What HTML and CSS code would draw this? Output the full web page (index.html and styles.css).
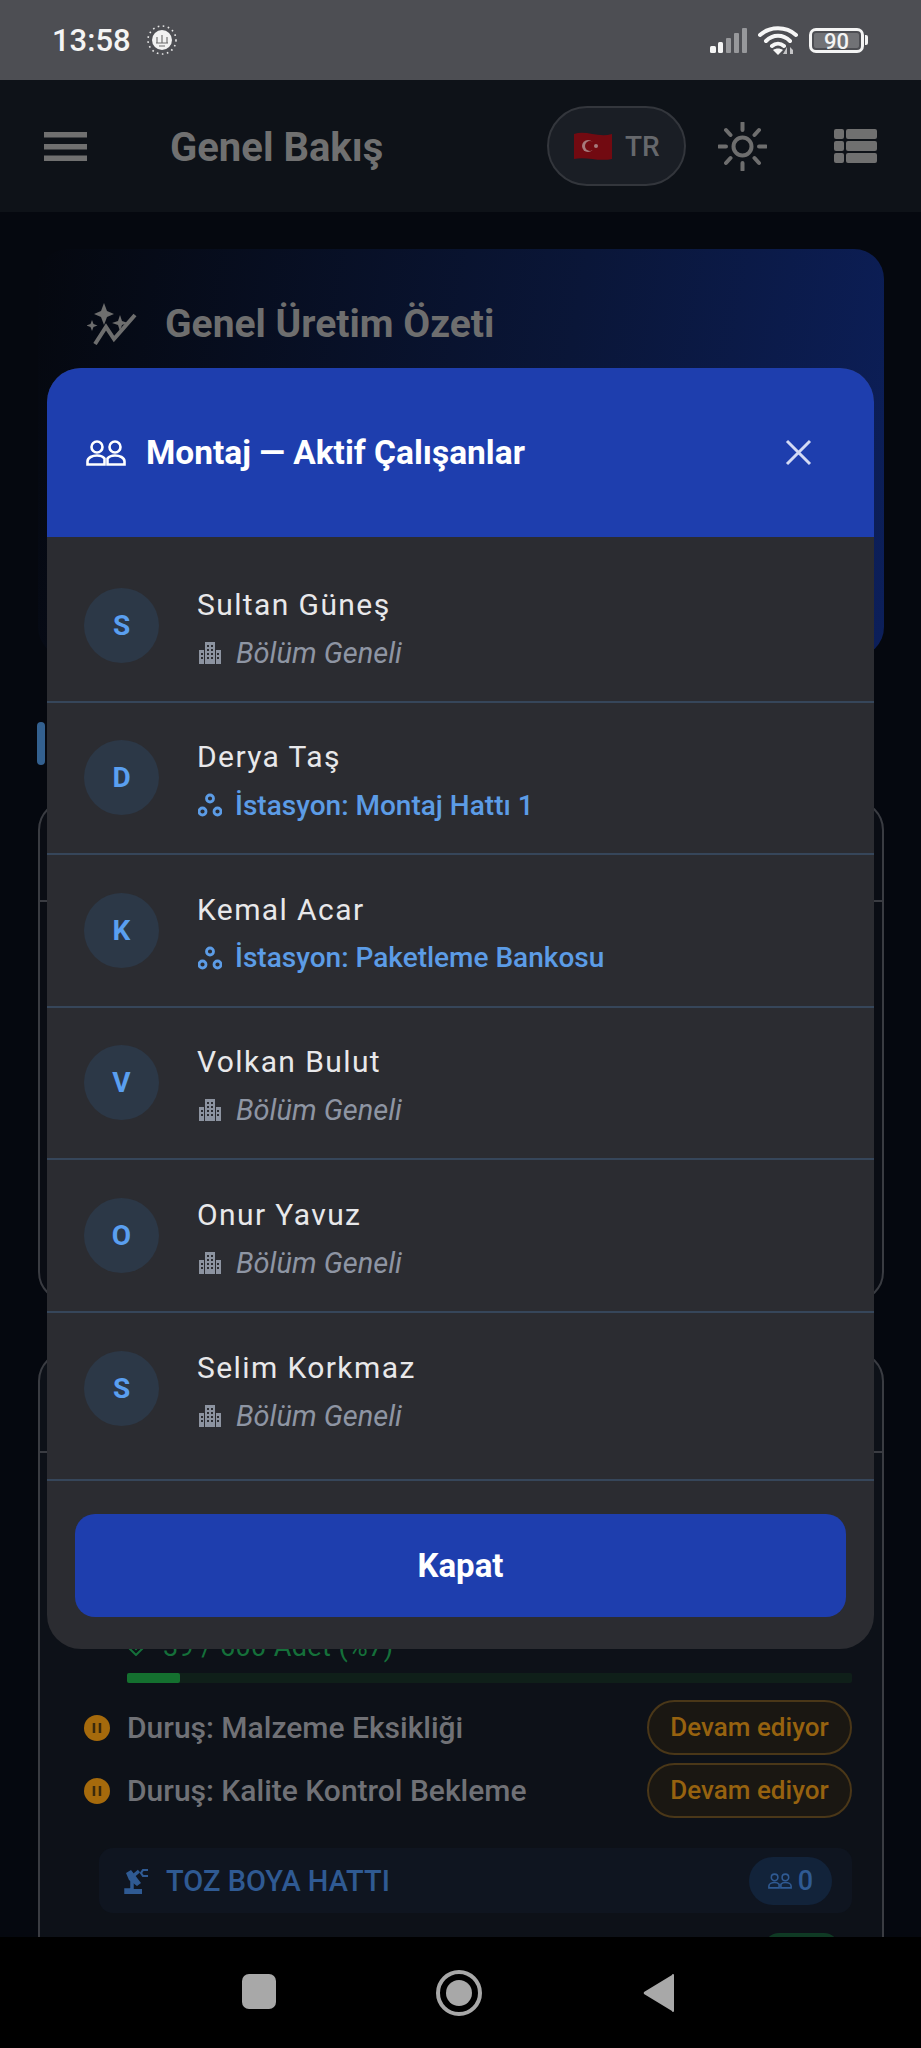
FILE: index.html
```html
<!DOCTYPE html>
<html lang="tr">
<head>
  <meta charset="UTF-8">
  <title>Genel Bakış</title>
  <meta name="viewport" content="width=device-width,initial-scale=1">
  <link rel="stylesheet" href="styles.css">
</head>
<body>
  <div class="screen">

    <!-- status bar -->
    <div class="statusbar">
      <div class="status-left">
        <span class="clock">13:58</span>
        <svg class="mosque" viewBox="0 0 30 30">
          <circle cx="15" cy="15" r="14" fill="none" stroke="#e8e8e8" stroke-width="1.6" stroke-dasharray="1.6 3.5"/>
          <circle cx="15" cy="15" r="10" fill="#f2f2f2"/>
          <path d="M10 12v6M20 12v6M15 10v8M9 18h12M12 21h6" stroke="#6a6a6a" stroke-width="1.1" fill="none"/>
        </svg>
      </div>
      <div class="status-right">
        <svg class="signal" viewBox="0 0 38 25">
          <rect x="0" y="18" width="6" height="7" rx="1.5" fill="#f4f4f4"/>
          <rect x="8" y="14" width="5" height="11" rx="1.5" fill="#f4f4f4"/>
          <rect x="16" y="10" width="5" height="15" rx="1" fill="#97989b"/>
          <rect x="24" y="5" width="5" height="20" rx="1" fill="#97989b"/>
          <rect x="32" y="0" width="5" height="25" rx="1" fill="#97989b"/>
        </svg>
        <svg class="wifi" viewBox="0 0 40 30">
          <path d="M2 10C12 1 28 1 38 10M8 16C15 9 25 9 32 16M14 21C17.500 18 22.500 18 26 21" fill="none" stroke="#f6f6f6" stroke-width="4" stroke-linecap="round"/>
          <path d="M20 30l-5-5c3-2 7-2 10 0z" fill="#f6f6f6"/>
          <path d="M29 29v-7l-4 7zM32 22v7h3v-4z" fill="#c4c4c6"/>
        </svg>
        <div class="battery">
          <div class="battery-body"><span class="battery-level">90</span></div>
          <div class="battery-nub"></div>
        </div>
      </div>
    </div>

    <!-- app bar -->
    <header class="appbar">
      <svg class="menu-icon" viewBox="0 0 43 29"><path d="M0 0h43v5.500H0zM0 12h43v5.500H0zM0 23.500h43V29H0z" fill="#707070"/></svg>
      <h1 class="page-title">Genel Bakış</h1>
      <div class="lang-pill">
        <svg class="flag" viewBox="0 0 38 28">
          <path d="M0 2c12-4 24 4 38 0v25c-14 3-26-3-38 0z" fill="#720a11"/>
          <circle cx="14" cy="14" r="6" fill="#a67a7c"/>
          <circle cx="16" cy="14" r="5" fill="#720a11"/>
          <circle cx="22" cy="14" r="2" fill="#a67a7c"/>
        </svg>
        <span class="lang-code">TR</span>
      </div>
      <svg class="sun-icon" viewBox="0 0 49 49">
        <circle cx="24.500" cy="24.500" r="9" fill="none" stroke="#6e6e6e" stroke-width="4"/>
        <path d="M24.500 1v7M24.500 41v7M1 24.500h7M41 24.500h7M8 8l4.500 5M36.500 36l4.500 5M41 8l-4.500 5M12.500 36L8 41" stroke="#6e6e6e" stroke-width="4" stroke-linecap="round"/>
      </svg>
      <svg class="list-icon" viewBox="0 0 43 34">
        <g fill="#707070">
          <rect x="0" y="0" width="10" height="10" rx="2"/><rect x="12" y="0" width="31" height="10" rx="2"/>
          <rect x="0" y="12" width="10" height="10" rx="2"/><rect x="12" y="12" width="31" height="10" rx="2"/>
          <rect x="0" y="24" width="10" height="10" rx="2"/><rect x="12" y="24" width="31" height="10" rx="2"/>
        </g>
      </svg>
    </header>

    <!-- dimmed page behind the dialog -->
    <main class="content">
      <section class="hero">
        <svg class="hero-icon" viewBox="0 0 51 42">
          <path d="M17 0l3 8 7 3-7 3-3 8-3-8-7-3 7-3zM33 12l2 6 6 2-6 2-2 6-2-6-6-2 6-2zM5 17l1.500 4 4 1.500-4 1.500L5 28l-1.500-4-4-1.500 4-1.500z" fill="#6e6e6e"/>
          <path d="M8 41l11-17 8 12 21-24" fill="none" stroke="#6e6e6e" stroke-width="4"/>
        </svg>
        <h2 class="hero-title">Genel Üretim Özeti</h2>
      </section>

      <div class="section-mark"></div>

      <section class="card card-first">
        <div class="card-head"></div>
      </section>

      <section class="card card-second">
        <div class="card-head"></div>
        <div class="card-body">
          <div class="count-line">
            <svg class="count-icon" viewBox="0 0 18 18"><path d="M2 4l7 7 7-7M2 10l7 7 7-7" fill="none" stroke="#15703a" stroke-width="2"/></svg>
            <span>39 / 600 Adet (%7)</span>
          </div>
          <div class="progress"><div class="progress-fill" style="width:7.300%"></div></div>

          <div class="stop-row">
            <svg class="pause-icon" viewBox="0 0 26 26"><circle cx="13" cy="13" r="13" fill="#a56a0c"/><path d="M10 8v10M16 8v10" stroke="#3a2a0c" stroke-width="2.500"/></svg>
            <span class="stop-text">Duruş: Malzeme Eksikliği</span>
            <span class="chip">Devam ediyor</span>
          </div>
          <div class="stop-row">
            <svg class="pause-icon" viewBox="0 0 26 26"><circle cx="13" cy="13" r="13" fill="#a56a0c"/><path d="M10 8v10M16 8v10" stroke="#3a2a0c" stroke-width="2.500"/></svg>
            <span class="stop-text">Duruş: Kalite Kontrol Bekleme</span>
            <span class="chip">Devam ediyor</span>
          </div>

          <div class="line-row">
            <svg class="robot-icon" viewBox="0 0 26 26">
              <path d="M3 26v-4h4l2-1V9l7-6" fill="none" stroke="#2f5a93" stroke-width="3.500"/>
              <path d="M3 26v-5h16v5zM6 12L3 5l5-3 10 13-4 3z" fill="#2f5a93"/>
              <path d="M25 2h-5l-2 3 2 3h5" fill="none" stroke="#2f5a93" stroke-width="2.200"/>
            </svg>
            <span class="line-name">TOZ BOYA HATTI</span>
            <span class="line-count">
              <svg class="count-people" viewBox="0 0 40 26">
                <g fill="none" stroke="#2f5a93" stroke-width="2.600">
                  <circle cx="11" cy="7" r="5.500"/><circle cx="29" cy="7" r="5.500"/>
                  <path d="M1.500 24.500v-3c0-4 5-6 9.500-6 3 0 6 1 7.500 3v6zM38.500 24.500v-3c0-4-5-6-9.500-6-3 0-6 1-7.500 3v6z"/>
                </g>
              </svg>
              0
            </span>
          </div>
          <div class="next-line"><span class="next-pill"></span></div>
        </div>
      </section>
    </main>

    <!-- nav buttons -->
    <div class="navbar">
      <div class="nav-square"></div>
      <svg class="nav-home" viewBox="0 0 46 46"><circle cx="23" cy="23" r="21" fill="none" stroke="#a8a8a8" stroke-width="4"/><circle cx="23" cy="23" r="13" fill="#a8a8a8"/></svg>
      <svg class="nav-back" viewBox="0 0 32 38"><path d="M31 1v36a1 1 0 0 1-2 0L1 20a2 2 0 0 1 0-2L29 1a1 1 0 0 1 2 0z" fill="#a8a8a8"/></svg>
    </div>

    <!-- dialog -->
    <div class="dialog">
      <div class="dialog-head">
        <svg class="head-people" viewBox="0 0 40 26">
          <g fill="none" stroke="#fff" stroke-width="2.600">
            <circle cx="11" cy="7" r="5.500"/><circle cx="29" cy="7" r="5.500"/>
            <path d="M1.500 24.500v-3c0-4 5-6 9.500-6 3 0 6 1 7.500 3v6zM38.500 24.500v-3c0-4-5-6-9.500-6-3 0-6 1-7.500 3v6z"/>
          </g>
        </svg>
        <span class="dialog-title">Montaj — Aktif Çalışanlar</span>
        <svg class="close-icon" viewBox="0 0 27 27"><path d="M2 2l23 23M25 2L2 25" stroke="#d3daf5" stroke-width="3"/></svg>
      </div>

      <div class="worker-list">
        <div class="worker">
          <div class="avatar">S</div>
          <div class="worker-info">
            <div class="worker-name">Sultan Güneş</div>
            <div class="worker-place"><svg class="ic-building" viewBox="0 0 22 22"><use href="#building"/></svg>Bölüm Geneli</div>
          </div>
        </div>
        <div class="worker">
          <div class="avatar">D</div>
          <div class="worker-info">
            <div class="worker-name">Derya Taş</div>
            <div class="worker-place station"><svg class="ic-hub" viewBox="0 0 24 24"><use href="#hub"/></svg>İstasyon: Montaj Hattı 1</div>
          </div>
        </div>
        <div class="worker">
          <div class="avatar">K</div>
          <div class="worker-info">
            <div class="worker-name">Kemal Acar</div>
            <div class="worker-place station"><svg class="ic-hub" viewBox="0 0 24 24"><use href="#hub"/></svg>İstasyon: Paketleme Bankosu</div>
          </div>
        </div>
        <div class="worker">
          <div class="avatar">V</div>
          <div class="worker-info">
            <div class="worker-name">Volkan Bulut</div>
            <div class="worker-place"><svg class="ic-building" viewBox="0 0 22 22"><use href="#building"/></svg>Bölüm Geneli</div>
          </div>
        </div>
        <div class="worker">
          <div class="avatar">O</div>
          <div class="worker-info">
            <div class="worker-name">Onur Yavuz</div>
            <div class="worker-place"><svg class="ic-building" viewBox="0 0 22 22"><use href="#building"/></svg>Bölüm Geneli</div>
          </div>
        </div>
        <div class="worker">
          <div class="avatar">S</div>
          <div class="worker-info">
            <div class="worker-name">Selim Korkmaz</div>
            <div class="worker-place"><svg class="ic-building" viewBox="0 0 22 22"><use href="#building"/></svg>Bölüm Geneli</div>
          </div>
        </div>
      </div>

      <div class="dialog-foot">
        <button class="close-btn">Kapat</button>
      </div>
    </div>

    <!-- shared icons -->
    <svg class="icon-defs" width="0" height="0">
      <defs>
        <g id="building">
          <path fill="#8c93a0" fill-rule="evenodd" d="M5 22V8H0v14zM17 22V8h5v14zM6 22V0h10v22z"/>
          <path fill="#2b2c31" d="M8 3h2v2H8zM12 3h2v2h-2zM8 7h2v2H8zM12 7h2v2h-2zM8 11h2v2H8zM12 11h2v2h-2zM8 15h2v2H8zM12 15h2v2h-2zM2 11h2v2H2zM2 15h2v2H2zM18 11h2v2h-2zM18 15h2v2h-2z"/>
        </g>
        <g id="hub" fill="none" stroke="#5c9ce6" stroke-width="2.800">
          <circle cx="12" cy="5.500" r="3.500"/><circle cx="4.500" cy="18.500" r="3.500"/><circle cx="19.500" cy="18.500" r="3.500"/>
        </g>
      </defs>
    </svg>
  </div>
</body>
</html>
```

FILE: styles.css
```css
* { box-sizing: border-box; }
html, body {
  margin: 0;
  padding: 0;
  background: #000;
}
body {
  font-family: Roboto, "Noto Sans", sans-serif;
}
.screen {
  position: relative;
  width: 921px;
  height: 2048px;
  overflow: hidden;
  display: flex;
  flex-direction: column;
  background: #05080f;
}
svg { display: block; flex: none; }
.icon-defs { position: absolute; }

/* -------- status bar -------- */
.statusbar {
  height: 80px;
  flex: none;
  background: #4d4e53;
  display: flex;
  align-items: center;
  justify-content: space-between;
  padding: 14px 53px 14px 52px;
  color: #f4f4f4;
}
.status-left, .status-right {
  display: flex;
  align-items: center;
}
.clock {
  font-size: 31px;
  font-weight: 500;
}
.mosque {
  width: 30px;
  height: 30px;
  margin-left: 16px;
}
.signal {
  width: 38px;
  height: 25px;
}
.wifi {
  width: 40px;
  height: 30px;
  margin-left: 10px;
}
.battery {
  display: flex;
  align-items: center;
  margin-left: 11px;
}
.battery-body {
  width: 55px;
  height: 25px;
  border: 3px solid #f4f4f4;
  border-radius: 7px;
  padding: 2px;
  display: flex;
}
.battery-level {
  flex: 1;
  background: #717276;
  border-radius: 2px;
  font-size: 22px;
  font-weight: 500;
  line-height: 17px;
  text-align: center;
  color: #f4f4f4;
}
.battery-nub {
  width: 3px;
  height: 10px;
  margin-left: 1px;
  background: #f4f4f4;
  border-radius: 0 2px 2px 0;
}

/* -------- app bar -------- */
.appbar {
  height: 132px;
  flex: none;
  background: #0e1218;
  display: flex;
  align-items: center;
  padding: 0 44px;
}
.menu-icon {
  width: 43px;
  height: 29px;
}
.page-title {
  margin: 3px 0 0 83px;
  flex: 1;
  font-size: 40px;
  font-weight: 700;
  color: #707070;
}
.lang-pill {
  width: 139px;
  height: 80px;
  display: flex;
  align-items: center;
  padding-left: 25px;
  background: #1a1e25;
  border: 2px solid #33363c;
  border-radius: 40px;
}
.flag {
  width: 38px;
  height: 28px;
}
.lang-code {
  margin-left: 13px;
  font-size: 28px;
  font-weight: 500;
  color: #66686c;
}
.sun-icon {
  width: 49px;
  height: 49px;
  margin-left: 32px;
}
.list-icon {
  width: 43px;
  height: 34px;
  margin-left: 67px;
}

/* -------- page behind -------- */
.content {
  flex: 1;
  min-height: 0;
  overflow: hidden;
  padding: 37px 37px 0 38px;
}
.hero {
  height: 408px;
  padding: 54px 49px;
  display: flex;
  align-items: flex-start;
  background: linear-gradient(100deg, #05080f 0%, #0a1638 60%, #0c1f5a 100%);
  border-radius: 30px;
}
.hero-icon {
  width: 51px;
  height: 42px;
}
.hero-title {
  margin: 0 0 0 27px;
  font-size: 39px;
  font-weight: 700;
  line-height: 42px;
  color: #6e6e6e;
}
.section-mark {
  width: 8px;
  height: 43px;
  margin: 65px 0 0 -1px;
  background: #33608f;
  border-radius: 4px;
}
.card {
  border: 2px solid #3a3c42;
  border-radius: 30px;
  background: #0a0d14;
}
.card-first {
  height: 502px;
  margin-top: 35px;
}
.card-second {
  height: 700px;
  margin-top: 49px;
  background: #0d1118;
}
.card-head {
  height: 100px;
  border-bottom: 2px solid #3a3c42;
}
.card-body {
  padding: 180px 30px 0 60px;
}
.count-line {
  display: flex;
  align-items: center;
  gap: 18px;
  margin-left: 27px;
  height: 28px;
  font-size: 27px;
  color: #15703a;
  letter-spacing: 0.4px;
}
.count-icon {
  width: 18px;
  height: 18px;
}
.progress {
  margin: 12px 0 0 27px;
  height: 10px;
  background: #0f1f19;
  border-radius: 2px;
}
.progress-fill {
  height: 100%;
  background: #14702f;
  border-radius: 2px;
}
.stop-row {
  display: flex;
  align-items: center;
  height: 55px;
  margin-top: 8px;
}
.progress + .stop-row { margin-top: 17px; }
.pause-icon {
  width: 26px;
  height: 26px;
  margin-left: -16px;
}
.stop-text {
  flex: 1;
  margin-left: 17px;
  font-size: 30px;
  font-weight: 500;
  color: #707176;
}
.chip {
  width: 205px;
  height: 55px;
  text-align: center;
  line-height: 51px;
  font-size: 26px;
  font-weight: 500;
  color: #96620f;
  background: #1a1712;
  border: 2px solid #4a3718;
  border-radius: 28px;
}
.line-row {
  display: flex;
  align-items: center;
  height: 65px;
  margin: 30px 0 0 0;
  margin-left: -1px;
  padding: 0 20px 0 24px;
  background: #0f1520;
  border-radius: 14px;
}
.robot-icon {
  width: 26px;
  height: 26px;
}
.line-name {
  flex: 1;
  margin-left: 17px;
  font-size: 29px;
  font-weight: 500;
  color: #2f5a93;
}
.line-count {
  display: flex;
  align-items: center;
  justify-content: center;
  gap: 6px;
  width: 83px;
  height: 48px;
  background: #12233a;
  border-radius: 24px;
  font-size: 27px;
  font-weight: 500;
  color: #2f5a93;
}
.count-people {
  width: 24px;
  height: 16px;
}
.next-line {
  display: flex;
  justify-content: flex-end;
  padding-right: 13px;
  margin-top: 20px;
}
.next-pill {
  width: 75px;
  height: 30px;
  background: #0f3a24;
  border-radius: 15px;
}

/* -------- nav buttons -------- */
.navbar {
  height: 111px;
  flex: none;
  background: #000;
  position: relative;
  z-index: 3;
  display: flex;
  align-items: center;
  padding: 0 0 0 242px;
}
.nav-square {
  width: 34px;
  height: 35px;
  background: #a8a8a8;
  border-radius: 7px;
  margin-bottom: 2px;
}
.nav-home {
  width: 46px;
  height: 46px;
  margin: 0 0 0 160px;
}
.nav-back {
  width: 32px;
  height: 38px;
  margin-left: 161px;
}

/* -------- dialog -------- */
.dialog {
  position: absolute;
  left: 47px;
  top: 368px;
  width: 827px;
  height: 1281px;
  z-index: 2;
  background: #2b2c31;
  border-radius: 34px;
  overflow: hidden;
  display: flex;
  flex-direction: column;
}
.dialog-head {
  height: 169px;
  flex: none;
  background: #1e3eae;
  display: flex;
  align-items: center;
  padding: 0 62px 0 39px;
  color: #fff;
}
.head-people {
  width: 40px;
  height: 26px;
}
.dialog-title {
  flex: 1;
  margin-left: 20px;
  font-size: 33.5px;
  font-weight: 700;
}
.close-icon {
  width: 27px;
  height: 27px;
}
.worker-list {
  padding: 13px 0 14px;
  border-bottom: 2px solid #36465a;
}
.worker {
  height: 152.5px;
  display: flex;
  align-items: center;
  padding-left: 37px;
  border-bottom: 2px solid #36465a;
}
.worker:last-child { border-bottom: none; }
.avatar {
  width: 75px;
  height: 75px;
  flex: none;
  border-radius: 50%;
  background: #2c3847;
  color: #5a9ff0;
  font-size: 28px;
  font-weight: 700;
  text-align: center;
  line-height: 75px;
}
.worker-info {
  margin-left: 38px;
  padding-top: 6px;
  display: flex;
  flex-direction: column;
  gap: 13px;
}
.worker-name {
  font-size: 30px;
  line-height: 36px;
  letter-spacing: 1.4px;
  color: #e8e8ea;
}
.worker-place {
  display: flex;
  align-items: center;
  height: 34px;
  font-size: 29px;
  font-style: italic;
  color: #8e95a3;
}
.worker-place.station {
  font-style: normal;
  font-weight: 500;
  font-size: 28px;
  color: #5c9ce6;
}
.ic-building {
  width: 22px;
  height: 22px;
  margin: 0 15px 0 2px;
}
.ic-hub {
  width: 24px;
  height: 24px;
  margin: 0 13px 0 1px;
}
.dialog-foot {
  padding: 33px 28px;
}
.close-btn {
  display: block;
  width: 771px;
  height: 103px;
  border: none;
  border-radius: 20px;
  background: #1e3eae;
  color: #fff;
  font-family: inherit;
  font-size: 33px;
  font-weight: 700;
}
```
